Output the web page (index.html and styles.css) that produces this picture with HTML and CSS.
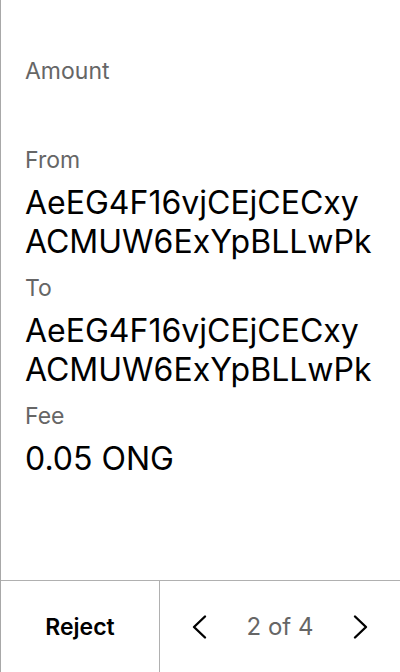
FILE: index.html
```html
<!DOCTYPE html>
<html>
<head>
<meta charset="utf-8">
<link rel="stylesheet" href="styles.css">
</head>
<body>
<div class="screen">
  <main class="details">
    <section class="field">
      <div class="label">Amount</div>
      <div class="value"></div>
    </section>
    <section class="field">
      <div class="label">From</div>
      <div class="value">AeEG4F16vjCEjCECxy<br>ACMUW6ExYpBLLwPk</div>
    </section>
    <section class="field">
      <div class="label">To</div>
      <div class="value">AeEG4F16vjCEjCECxy<br>ACMUW6ExYpBLLwPk</div>
    </section>
    <section class="field">
      <div class="label">Fee</div>
      <div class="value">0.05 ONG</div>
    </section>
  </main>
  <footer class="actions">
    <button class="reject">Reject</button>
    <div class="pager">
      <button class="nav" aria-label="Previous">
        <svg width="26" height="26" viewBox="0 0 26 26"><path d="M19 2.5 L8 13 L19 23.5" fill="none" stroke="#000" stroke-width="2.4" stroke-linecap="round" stroke-linejoin="round"/></svg>
      </button>
      <span class="count">2 of 4</span>
      <button class="nav" aria-label="Next">
        <svg width="26" height="26" viewBox="0 0 26 26"><path d="M7 2.5 L18 13 L7 23.5" fill="none" stroke="#000" stroke-width="2.4" stroke-linecap="round" stroke-linejoin="round"/></svg>
      </button>
    </div>
  </footer>
</div>
</body>
</html>
```

FILE: styles.css
```css
* { box-sizing: border-box; }
html, body { margin: 0; padding: 0; background: #fff; }
body { font-family: Inter, "Noto Sans", sans-serif; color: #000; }

.screen {
  width: 400px;
  height: 672px;
  border-left: 1px solid #a8a8a8;
  display: flex;
  flex-direction: column;
}

.details {
  flex: 1;
  padding: 56px 8px 0 24px;
  display: flex;
  flex-direction: column;
  gap: 12px;
}

.label {
  font-size: 23px;
  line-height: 30px;
  color: #666;
  margin-bottom: 8px;
}

.value {
  font-size: 32px;
  line-height: 39px;
  min-height: 39px;
  color: #000;
  white-space: nowrap;
}

.actions {
  height: 92px;
  border-top: 1px solid #b0b0b0;
  display: flex;
}

button {
  font-family: inherit;
  background: none;
  border: 0;
  padding: 0;
  margin: 0;
  cursor: pointer;
}

.reject {
  width: 159px;
  border-right: 1px solid #b0b0b0;
  font-size: 23px;
  font-weight: 600;
  color: #000;
}

.pager {
  flex: 1;
  display: flex;
  align-items: center;
  justify-content: space-between;
  padding: 0 26px;
}

.nav {
  width: 26px;
  height: 26px;
  display: flex;
  align-items: center;
  justify-content: center;
}

.count {
  font-size: 24px;
  color: #666;
}
```
